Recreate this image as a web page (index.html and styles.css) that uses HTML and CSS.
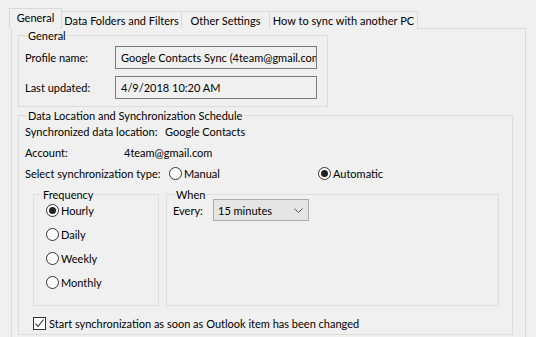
FILE: index.html
```html
<!DOCTYPE html>
<html>
<head>
<meta charset="utf-8">
<link rel="stylesheet" href="styles.css">
</head>
<body>
<div class="window">
  <div class="tabs">
    <div class="tab selected tab-general">General</div>
    <div class="tab tab-folders">Data Folders and Filters</div>
    <div class="tab tab-other">Other Settings</div>
    <div class="tab tab-howto">How to sync with another PC</div>
  </div>
  <div class="panel">
    <div class="group group-general">
      <div class="group-title">General</div>
      <div class="field-row">
        <div class="label label-wide">Profile name:</div>
        <div class="textbox">Google Contacts Sync (4team@gmail.com)</div>
      </div>
      <div class="field-row">
        <div class="label label-wide">Last updated:</div>
        <div class="textbox">4/9/2018 10:20 AM</div>
      </div>
    </div>

    <div class="group group-data">
      <div class="group-title">Data Location and Synchronization Schedule</div>
      <div class="info-row">
        <div class="label label-location">Synchronized data location:</div>
        <div class="value">Google Contacts</div>
      </div>
      <div class="info-row">
        <div class="label label-account">Account:</div>
        <div class="value">4team@gmail.com</div>
      </div>
      <div class="info-row">
        <div class="label label-type">Select synchronization type:</div>
        <div class="radio-item radio-manual"><span class="radio"></span><span>Manual</span></div>
        <div class="radio-item"><span class="radio checked"></span><span>Automatic</span></div>
      </div>

      <div class="sub-row">
        <div class="group group-frequency">
          <div class="group-title">Frequency</div>
          <div class="radio-row"><span class="radio checked"></span><span>Hourly</span></div>
          <div class="radio-row"><span class="radio"></span><span>Daily</span></div>
          <div class="radio-row"><span class="radio"></span><span>Weekly</span></div>
          <div class="radio-row"><span class="radio"></span><span>Monthly</span></div>
        </div>
        <div class="group group-when">
          <div class="group-title">When</div>
          <div class="when-row">
            <div class="label label-every">Every:</div>
            <div class="combo">
              <span>15 minutes</span>
              <svg class="chevron" width="9" height="5" viewBox="0 0 9 5"><polyline points="0.5,0.5 4.5,4.5 8.5,0.5" fill="none" stroke="#555" stroke-width="1"/></svg>
            </div>
          </div>
        </div>
      </div>

      <div class="check-row">
        <span class="checkbox"><svg width="11" height="11" viewBox="0 0 11 11"><polyline points="1.5,5.5 4,8.5 9.5,1.5" fill="none" stroke="#222" stroke-width="1.1"/></svg></span>
        <span>Start synchronization as soon as Outlook item has been changed</span>
      </div>
    </div>
  </div>
</div>
</body>
</html>
```

FILE: styles.css
```css
html, body {
  margin: 0;
  padding: 0;
  background: #f0f0f0;
}
body {
  font-family: Lato, "Noto Sans", sans-serif;
  font-size: 11px;
  color: #000;
  width: 536px;
  height: 337px;
  overflow: hidden;
}
.window {
  padding: 8px 0 0 9px;
}
.tabs {
  display: flex;
  align-items: flex-end;
  height: 21px;
  position: relative;
  z-index: 2;
  margin-bottom: -1px;
}
.tab {
  height: 18px;
  line-height: 17px;
  padding: 0;
  text-align: center;
  border: 1px solid #d9d9d9;
  border-bottom: none;
  margin-left: -1px;
  box-sizing: border-box;
  white-space: nowrap;
  background: #f0f0f0;
  flex: none;
}
.tab.selected {
  margin-left: 0;
  height: 21px;
  line-height: 17px;
  padding-bottom: 4px;
  position: relative;
  z-index: 3;
}
.tab-general { width: 53px; }
.tab-folders { width: 121px; }
.tab-other { width: 89px; }
.tab-howto { width: 149px; }
.panel {
  margin-left: 2px;
  width: 515px;
  height: 320px;
  box-sizing: border-box;
  border: 1px solid #d9d9d9;
  border-bottom: none;
  padding: 6px 0 0 6px;
}
.group {
  position: relative;
  border: 1px solid #dcdcdc;
  box-sizing: border-box;
}
.group-title {
  position: absolute;
  top: -7px;
  left: 8px;
  padding: 0 1px;
  line-height: 13px;
  background: #f0f0f0;
  white-space: nowrap;
}
.group-general {
  width: 310px;
  height: 72px;
  padding: 10px 0 0 6px;
  display: flex;
  flex-direction: column;
  gap: 7px;
}
.field-row {
  display: flex;
  align-items: center;
  height: 23px;
}
.label {
  white-space: nowrap;
  flex: none;
}
.label-wide { width: 90px; }
.textbox {
  width: 202px;
  height: 23px;
  box-sizing: border-box;
  border: 1px solid #7a7a7a;
  background: #f0f0f0;
  padding: 0 5px;
  line-height: 21px;
  white-space: nowrap;
  overflow: hidden;
}
.group-data {
  margin-top: 8px;
  width: 495px;
  height: 220px;
  padding: 5px 0 0 6px;
}
.info-row {
  display: flex;
  align-items: center;
  height: 21px;
}
.label-location { width: 140px; }
.label-account { width: 99px; }
.label-type { width: 144px; }
.radio-item {
  display: flex;
  align-items: center;
  gap: 2px;
}
.radio-manual { width: 149px; }
.radio {
  width: 13px;
  height: 13px;
  box-sizing: border-box;
  border: 1px solid #333;
  border-radius: 50%;
  background: #fff;
  display: flex;
  align-items: center;
  justify-content: center;
  flex: none;
}
.radio.checked::after {
  content: "";
  width: 7px;
  height: 7px;
  border-radius: 50%;
  background: #222;
}
.sub-row {
  display: flex;
  gap: 7px;
  margin-top: 10px;
  margin-left: 8px;
}
.group-frequency {
  width: 126px;
  height: 112px;
  padding: 3px 0 0 12px;
}
.radio-row {
  display: flex;
  align-items: center;
  gap: 2px;
  height: 24px;
}
.group-when {
  width: 333px;
  height: 112px;
  padding: 4px 0 0 6px;
}
.when-row {
  display: flex;
  align-items: center;
}
.label-every { width: 40px; }
.combo {
  width: 96px;
  height: 22px;
  box-sizing: border-box;
  border: 1px solid #adadad;
  background: #e5e5e5;
  display: flex;
  align-items: center;
  justify-content: space-between;
  padding: 0 4px 0 4px;
}
.chevron { display: block; margin-right: 1px; }
.check-row {
  display: flex;
  align-items: center;
  gap: 3px;
  margin-top: 10px;
  margin-left: 8px;
  height: 15px;
}
.checkbox {
  width: 13px;
  height: 13px;
  box-sizing: border-box;
  border: 1px solid #333;
  background: #fff;
  display: flex;
  align-items: center;
  justify-content: center;
  flex: none;
}
.checkbox svg { display: block; }
```
